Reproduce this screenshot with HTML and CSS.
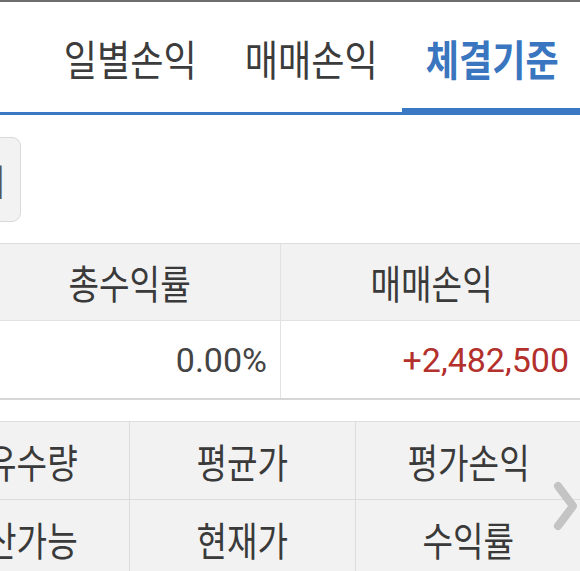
FILE: index.html
```html
<!DOCTYPE html>
<html lang="ko">

<head>
    <meta charset="UTF-8" />
    <meta name="viewport" content="width=device-width, initial-scale=1.0" />
    <title>체결기준 손익</title>
    <link rel="stylesheet" href="styles.css">
</head>

<body>
    <div class="screen">
        <nav class="tabs">
            <div class="tab"><span class="ko">일별손익</span></div>
            <div class="tab"><span class="ko">매매손익</span></div>
            <div class="tab active"><span class="ko">체결기준</span></div>
        </nav>

        <div class="toolbar">
            <button class="search-btn" type="button"><span class="ko">조회</span></button>
        </div>

        <div class="summary">
            <div class="cell head"><span class="ko">총수익률</span></div>
            <div class="cell head"><span class="ko">매매손익</span></div>
            <div class="cell value">0.00%</div>
            <div class="cell value plus">+2,482,500</div>
        </div>

        <div class="holdings">
            <div class="grid">
                <div class="col"><span class="ko">보유수량</span></div>
                <div class="col"><span class="ko">평균가</span></div>
                <div class="col"><span class="ko">평가손익</span></div>
                <div class="col"><span class="ko">청산가능</span></div>
                <div class="col"><span class="ko">현재가</span></div>
                <div class="col"><span class="ko">수익률</span></div>
            </div>
            <svg class="more" width="30" height="56" viewBox="0 0 30 56">
                <polyline points="8,8 23,28 8,48" fill="none" stroke="#c4c4c4" stroke-width="8"
                    stroke-linecap="round" stroke-linejoin="round" />
            </svg>
        </div>
    </div>
</body>

</html>
```

FILE: styles.css
```css
body {
    margin: 0;
    padding: 0;
    background-color: #ffffff;
    font-family: 'Noto Sans CJK KR', 'Noto Sans', sans-serif;
    color: #3a3a3a;
}

.screen {
    width: 580px;
    height: 571px;
    overflow: hidden;
    border-top: 2px solid #6e6e6e;
    box-sizing: border-box;
}

/* narrow hangul like the phone font */
.ko {
    display: inline-block;
    transform: scaleX(0.83);
    white-space: nowrap;
}

.tabs {
    display: flex;
    padding-left: 40px;
    border-bottom: 3px solid #3b78c4;
}

.tab {
    flex: none;
    width: 181px;
    height: 110px;
    display: flex;
    align-items: center;
    justify-content: center;
    font-size: 42px;
    color: #3c3c3c;
}

.tab .ko {
    transform: scaleX(0.86);
}

.tab.active {
    color: #3a76c0;
    font-weight: bold;
    box-shadow: inset 0 -4px 0 #3b78c4;
}

.toolbar {
    padding: 22px 0 21px;
}

.search-btn {
    display: flex;
    align-items: center;
    justify-content: flex-end;
    width: 120px;
    height: 85px;
    margin-left: -99px;
    padding: 0 9px 0 0;
    background-color: #f2f2f2;
    border: 1px solid #d9d9d9;
    border-radius: 9px;
    font-family: inherit;
    font-size: 36px;
    color: #555;
}

.summary {
    display: grid;
    grid-template-columns: 302px 302px;
    margin-left: -21px;
    border-top: 1px solid #dedede;
    border-bottom: 2px solid #d6d6d6;
}

.cell {
    display: flex;
    align-items: center;
    border-right: 1px solid #e2e2e2;
}

.cell.head {
    height: 76px;
    justify-content: center;
    background-color: #f2f2f2;
    border-bottom: 1px solid #e2e2e2;
    font-size: 40px;
    color: #3a3a3a;
}

.cell.value {
    height: 77px;
    justify-content: flex-end;
    padding-right: 13px;
    font-family: Roboto, 'Noto Sans', sans-serif;
    font-size: 34px;
    color: #444;
}

.cell.plus {
    color: #b3302c;
}

.holdings {
    position: relative;
    margin-top: 21px;
    border-top: 1px solid #dedede;
    background-color: #f2f2f2;
}

.grid {
    display: grid;
    grid-template-columns: repeat(3, 226px);
    margin-left: -96px;
}

.col {
    height: 77px;
    display: flex;
    align-items: center;
    justify-content: center;
    border-right: 1px solid #dcdcdc;
    border-bottom: 1px solid #dcdcdc;
    font-size: 40px;
    color: #3a3a3a;
}

.more {
    position: absolute;
    right: 0;
    top: 56px;
}
```
